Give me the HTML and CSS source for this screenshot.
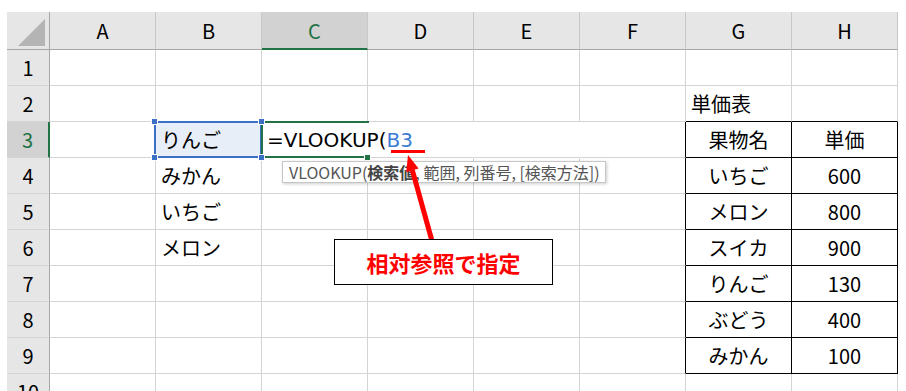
FILE: index.html
```html
<!DOCTYPE html>
<html lang="ja">
<head>
    <meta charset="UTF-8">
    <meta name="viewport" content="width=device-width, initial-scale=1.0">
    <title>VLOOKUP</title>
    <link rel="stylesheet" href="styles.css">
</head>
<body>
    <div class="sheet">
        <!-- intestazione colonne -->
        <div class="corner"><i class="tri"></i></div>
        <div class="colhead">A</div>
        <div class="colhead">B</div>
        <div class="colhead active">C</div>
        <div class="colhead">D</div>
        <div class="colhead">E</div>
        <div class="colhead">F</div>
        <div class="colhead">G</div>
        <div class="colhead">H</div>

        <!-- riga 1 -->
        <div class="rowhead">1</div>
        <div class="cell"></div><div class="cell"></div><div class="cell"></div><div class="cell"></div>
        <div class="cell"></div><div class="cell"></div><div class="cell"></div><div class="cell"></div>

        <!-- riga 2 -->
        <div class="rowhead">2</div>
        <div class="cell"></div><div class="cell"></div><div class="cell"></div><div class="cell"></div>
        <div class="cell"></div><div class="cell"></div>
        <div class="cell ttop">単価表</div>
        <div class="cell ttop"></div>

        <!-- riga 3 -->
        <div class="rowhead active">3</div>
        <div class="cell"></div>
        <div class="cell range">
            <span>りんご</span>
            <i class="range-box"></i>
            <i class="handle h-tl"></i><i class="handle h-tr"></i>
            <i class="handle h-bl"></i><i class="handle h-br"></i>
        </div>
        <div class="cell edit current">
            <span class="formula">=VLOOKUP(<span class="ref">B3</span></span>
            <i class="current-box"></i>
            <i class="handle green"></i>
        </div>
        <div class="cell edit"></div>
        <div class="cell edit"></div>
        <div class="cell edit tleft"></div>
        <div class="cell tcell">果物名</div>
        <div class="cell tcell">単価</div>

        <!-- riga 4 -->
        <div class="rowhead">4</div>
        <div class="cell"></div>
        <div class="cell">みかん</div>
        <div class="cell"></div><div class="cell"></div><div class="cell"></div>
        <div class="cell tleft"></div>
        <div class="cell tcell">いちご</div>
        <div class="cell tcell">600</div>

        <!-- riga 5 -->
        <div class="rowhead">5</div>
        <div class="cell"></div>
        <div class="cell">いちご</div>
        <div class="cell"></div><div class="cell"></div><div class="cell"></div>
        <div class="cell tleft"></div>
        <div class="cell tcell">メロン</div>
        <div class="cell tcell">800</div>

        <!-- riga 6 -->
        <div class="rowhead">6</div>
        <div class="cell"></div>
        <div class="cell">メロン</div>
        <div class="cell"></div><div class="cell"></div><div class="cell"></div>
        <div class="cell tleft"></div>
        <div class="cell tcell">スイカ</div>
        <div class="cell tcell">900</div>

        <!-- riga 7 -->
        <div class="rowhead">7</div>
        <div class="cell"></div><div class="cell"></div><div class="cell"></div><div class="cell"></div><div class="cell"></div>
        <div class="cell tleft"></div>
        <div class="cell tcell">りんご</div>
        <div class="cell tcell">130</div>

        <!-- riga 8 -->
        <div class="rowhead">8</div>
        <div class="cell"></div><div class="cell"></div><div class="cell"></div><div class="cell"></div><div class="cell"></div>
        <div class="cell tleft"></div>
        <div class="cell tcell">ぶどう</div>
        <div class="cell tcell">400</div>

        <!-- riga 9 -->
        <div class="rowhead">9</div>
        <div class="cell"></div><div class="cell"></div><div class="cell"></div><div class="cell"></div><div class="cell"></div>
        <div class="cell tleft"></div>
        <div class="cell tcell">みかん</div>
        <div class="cell tcell">100</div>

        <!-- riga 10 -->
        <div class="rowhead">10</div>
        <div class="cell"></div><div class="cell"></div><div class="cell"></div><div class="cell"></div>
        <div class="cell"></div><div class="cell"></div><div class="cell"></div><div class="cell"></div>
    </div>

    <!-- suggerimento della funzione -->
    <div class="tooltip">VLOOKUP(<b>検索値</b>, 範囲, 列番号, [検索方法])</div>

    <!-- freccia e sottolineatura -->
    <svg class="arrow" width="906" height="391" viewBox="0 0 906 391">
        <rect x="391" y="150" width="34" height="3" fill="#ff0000"/>
        <line x1="432" y1="241" x2="412.4" y2="170.4" stroke="#ff0000" stroke-width="5"/>
        <polygon points="408,155 418.6,168.6 406.2,172.2" fill="#ff0000"/>
    </svg>

    <div class="callout">相対参照で指定</div>
</body>
</html>
```

FILE: styles.css
```css
/* Stile generale */
body {
    margin: 0;
    height: 391px;
    overflow: hidden;
    position: relative;
    background-color: #ffffff;
    font-family: "Noto Sans CJK JP", "Noto Sans", sans-serif;
}

/* Griglia del foglio */
.sheet {
    display: grid;
    grid-template-columns: 43px repeat(8, 106px);
    grid-template-rows: 38px repeat(10, 36px);
    padding: 12px 0 0 7px;
}

.sheet > div {
    box-sizing: border-box;
    display: flex;
    align-items: center;
    white-space: nowrap;
    border-right: 1px solid #d4d4d4;
    border-bottom: 1px solid #d4d4d4;
    font-size: 20px;
    color: #000000;
}

/* Intestazioni */
.corner {
    position: relative;
    background-color: #e6e6e6;
    border-bottom-color: #a6a6a6 !important;
    border-right-color: #a6a6a6 !important;
}

.corner .tri {
    position: absolute;
    right: 4px;
    bottom: 3px;
    width: 0;
    height: 0;
    border-left: 27px solid transparent;
    border-bottom: 27px solid #b4b4b4;
}

.colhead {
    justify-content: center;
    background-color: #e6e6e6;
    border-right-color: #c8c8c8 !important;
    border-bottom-color: #a6a6a6 !important;
    font-size: 19px;
    color: #222222;
}

.colhead.active {
    background-color: #d2d2d2;
    border-bottom: 2px solid #217346 !important;
    color: #217346;
}

.rowhead {
    justify-content: center;
    background-color: #e6e6e6;
    border-right-color: #a6a6a6 !important;
    font-size: 19px;
    color: #222222;
}

.rowhead.active {
    background-color: #d2d2d2;
    border-right: 2px solid #217346 !important;
    color: #217346;
}

/* Celle */
.cell {
    padding-left: 5px;
    position: relative;
}

.cell.edit {
    border-right-color: transparent;
}

.formula {
    font-family: "DejaVu Sans", "Noto Sans CJK JP", sans-serif;
}

.ref {
    color: #3b7bd4;
}

/* Intervallo selezionato B3 */
.cell.range {
    background-color: #e8eef8;
}

.range-box {
    position: absolute;
    left: -2px;
    top: -1px;
    width: 108px;
    height: 37px;
    box-sizing: border-box;
    border: 2px solid #3c70c6;
    z-index: 1;
}

.handle {
    position: absolute;
    width: 5px;
    height: 5px;
    background-color: #3c70c6;
    border: 1px solid #ffffff;
    box-sizing: content-box;
    z-index: 3;
}

.h-tl { left: -5px; top: -4px; }
.h-tr { right: -4px; top: -4px; }
.h-bl { left: -5px; bottom: -4px; }
.h-br { right: -4px; bottom: -4px; }

/* Cella attiva C3 */
.cell.current {
    z-index: 2;
}

.current-box {
    position: absolute;
    left: -1px;
    top: -1px;
    width: 108px;
    height: 37px;
    box-sizing: border-box;
    border: 2px solid #217346;
    border-right: none;
    z-index: 2;
}

.handle.green {
    background-color: #217346;
    right: -4px;
    bottom: -4px;
}

/* Tabella dei prezzi */
.cell.ttop {
    border-bottom-color: #000000;
}

.cell.tleft {
    border-right-color: #000000;
}

.cell.tcell {
    justify-content: center;
    padding-left: 0;
    border-right-color: #000000;
    border-bottom-color: #000000;
}

/* Suggerimento */
.tooltip {
    position: absolute;
    left: 282px;
    top: 161px;
    width: 324px;
    height: 22px;
    box-sizing: border-box;
    padding-left: 6px;
    background-color: #ffffff;
    border: 1px solid #c6c6c6;
    box-shadow: 1px 1px 3px rgba(0, 0, 0, 0.2);
    font-size: 16px;
    line-height: 20px;
    color: #555555;
    white-space: nowrap;
    z-index: 4;
}

.tooltip b {
    color: #444444;
}

.arrow {
    position: absolute;
    left: 0;
    top: 0;
    z-index: 5;
}

/* Riquadro della nota */
.callout {
    position: absolute;
    left: 334px;
    top: 239px;
    width: 219px;
    height: 46px;
    box-sizing: border-box;
    display: flex;
    align-items: center;
    justify-content: center;
    background-color: #ffffff;
    border: 1px solid #000000;
    font-size: 22px;
    font-weight: bold;
    color: #ff0000;
    z-index: 6;
}
```
